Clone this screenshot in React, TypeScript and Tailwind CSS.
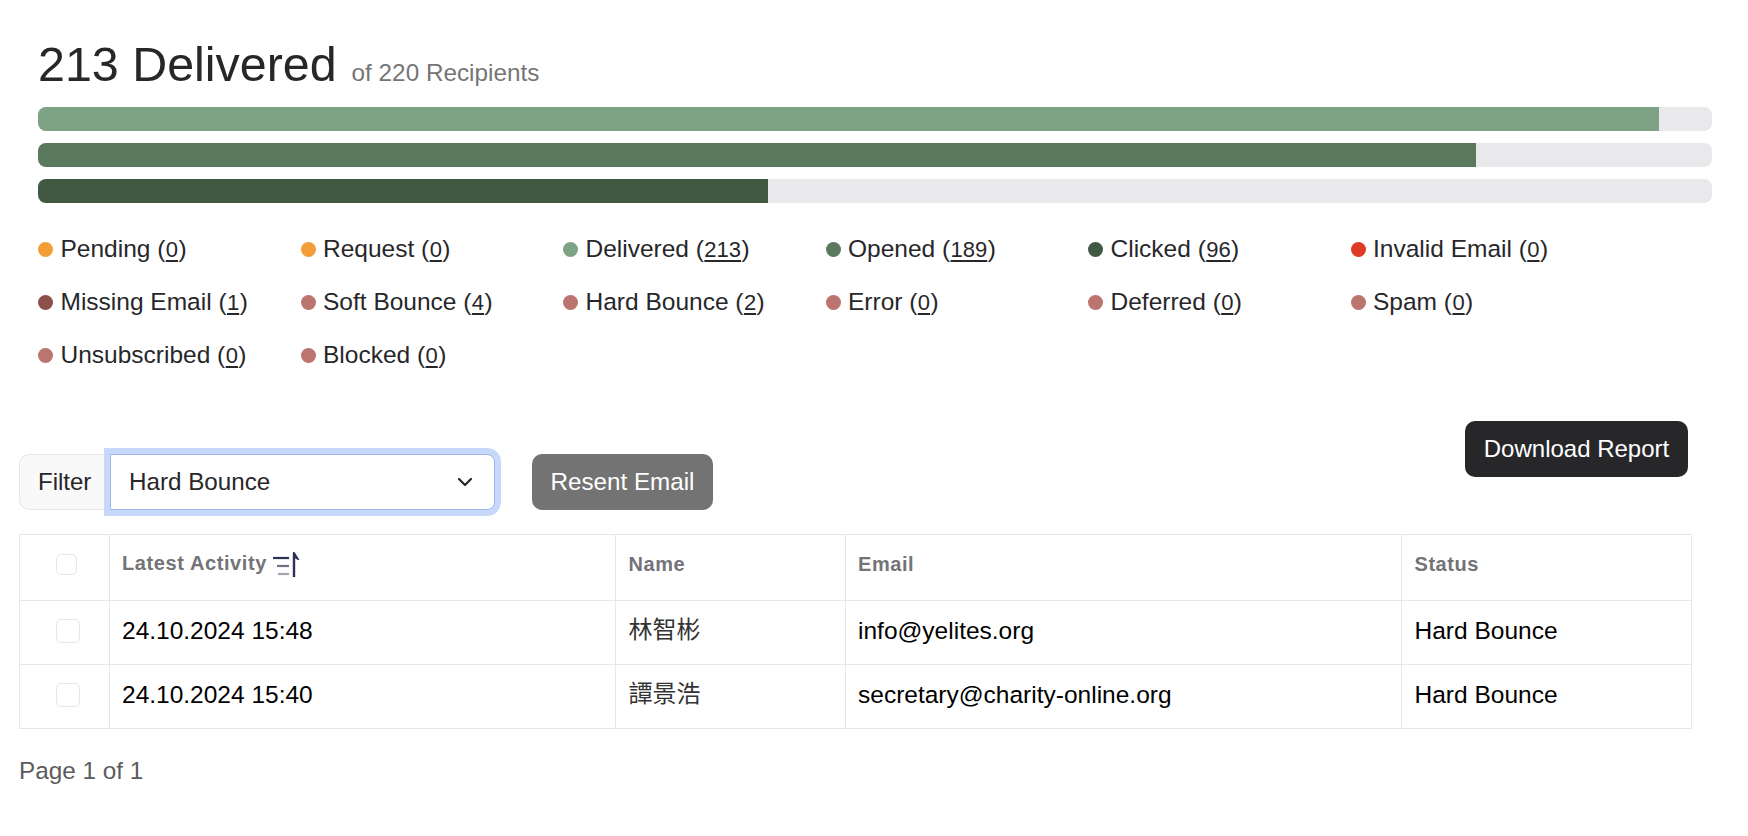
import { ChevronDown } from 'lucide-react';

interface LegendItem {
  label: string;
  count: number;
  color: string;
}

const legend: LegendItem[] = [
  { label: 'Pending', count: 0, color: 'bg-[#f29d38]' },
  { label: 'Request', count: 0, color: 'bg-[#f29d38]' },
  { label: 'Delivered', count: 213, color: 'bg-[#7da384]' },
  { label: 'Opened', count: 189, color: 'bg-[#5a795f]' },
  { label: 'Clicked', count: 96, color: 'bg-[#415943]' },
  { label: 'Invalid Email', count: 0, color: 'bg-[#de3b24]' },
  { label: 'Missing Email', count: 1, color: 'bg-[#8e504a]' },
  { label: 'Soft Bounce', count: 4, color: 'bg-[#bb746e]' },
  { label: 'Hard Bounce', count: 2, color: 'bg-[#bb746e]' },
  { label: 'Error', count: 0, color: 'bg-[#bb746e]' },
  { label: 'Deferred', count: 0, color: 'bg-[#bb746e]' },
  { label: 'Spam', count: 0, color: 'bg-[#bb746e]' },
  { label: 'Unsubscribed', count: 0, color: 'bg-[#bb746e]' },
  { label: 'Blocked', count: 0, color: 'bg-[#bb746e]' },
];

const bars = [
  { value: 213, color: 'bg-[#7da384]' },
  { value: 189, color: 'bg-[#5a795f]' },
  { value: 96, color: 'bg-[#415943]' },
];

const rows = [
  { date: '24.10.2024 15:48', name: '林智彬', email: 'info@yelites.org', status: 'Hard Bounce' },
  { date: '24.10.2024 15:40', name: '譚景浩', email: 'secretary@charity-online.org', status: 'Hard Bounce' },
];

function SortIcon() {
  return (
    <svg width="30" height="28" viewBox="0 0 30 28" fill="none" className="mb-[-4px] ml-[5px] shrink-0">
      <path d="M1 7h16" stroke="#2c3154" strokeWidth="2.2" />
      <path d="M5 15h12" stroke="#6f7285" strokeWidth="2.2" />
      <path d="M6 23h11" stroke="#a3a5b0" strokeWidth="2.2" />
      <path d="M22 26V2" stroke="#2c3154" strokeWidth="2.4" />
      <path d="M21 1h1.5l5 8H26l-5-3z" fill="#2c3154" />
    </svg>
  );
}

export default function App() {
  return (
    <div className="min-h-[836px] bg-white font-['Liberation_Sans','Noto_Sans_CJK_TC',sans-serif] text-[24.5px] text-[#27272a]">
      <div className="pt-[40px] pl-[38px] pr-[36px]">
        <div className="flex items-baseline leading-none">
          <h1 className="text-[48.4px] leading-[48px] font-normal">213 Delivered</h1>
          <span className="ml-[15px] text-[24.3px] text-[#757575]">of 220 Recipients</span>
        </div>

        <div className="mt-[19px] flex flex-col gap-[12px]">
          {bars.map((bar) => (
            <div key={bar.value} className="h-[24px] overflow-hidden rounded-[8px] bg-[#e9e9ec]">
              <div className={`h-full ${bar.color}`} style={{ width: `${(bar.value / 220) * 100}%` }} />
            </div>
          ))}
        </div>

        <div className="mt-[30px] grid w-[1575px] grid-cols-6 gap-y-[21px]">
          {legend.map((item) => (
            <div key={item.label} className="flex h-[32px] items-center leading-[32px] whitespace-nowrap">
              <span className={`mr-[7.5px] h-[15px] w-[15px] rounded-full ${item.color}`} />
              <span>
                {item.label} (<a className="px-[0.4px] text-[22px] leading-none underline underline-offset-[3px]">{item.count}</a>)
              </span>
            </div>
          ))}
        </div>
      </div>

      <div className="pl-[19px] pr-[57px]">
        <div className="mt-[50px] flex items-start justify-between pr-[3px]">
          <div className="mt-[33px] flex items-center text-[24px]">
            <div className="flex h-[56px] w-[91px] items-center rounded-l-[10px] border border-r-0 border-[#e5e7eb] bg-[#f9f9fa] pl-[18px]">
              Filter
            </div>
            <div className="flex h-[56px] w-[385px] items-center justify-between rounded-r-[8px] border border-[#9fb8ea] bg-white pr-[17px] pl-[18px] ring-[6px] ring-[#c7d8fb]">
              <span className="text-[24.2px]">Hard Bounce</span>
              <ChevronDown size={24} strokeWidth={2.2} />
            </div>
            <button className="ml-[37px] h-[56px] w-[181px] rounded-[10px] bg-[#737373] text-[24.2px] text-white">Resent Email</button>
          </div>
          <button className="h-[56px] w-[223px] rounded-[10px] bg-[#27272a] text-[24px] text-white">Download Report</button>
        </div>

        <table className="mt-[24px] w-[1672px] table-fixed border-collapse text-left text-black">
          <thead>
            <tr className="h-[66px]">
              <th className="w-[90px] border border-[#e5e7eb] pb-[7px]">
                <span className="ml-[36px] block h-[21px] w-[21px] rounded-[5px] border border-[#e5e7eb]" />
              </th>
              <th className="w-[506px] border border-[#e5e7eb] pb-[7px] pl-[12px] text-[20px] font-bold tracking-[0.6px] text-[#737378]">
                <div className="mb-[2px] flex items-center">
                  Latest Activity
                  <SortIcon />
                </div>
              </th>
              <th className="w-[230px] border border-[#e5e7eb] pb-[7px] pl-[12.5px] text-[20px] font-bold tracking-[0.55px] text-[#737378]">Name</th>
              <th className="w-[556px] border border-[#e5e7eb] pb-[7px] pl-[12px] text-[20px] font-bold tracking-[0.55px] text-[#737378]">Email</th>
              <th className="w-[290px] border border-[#e5e7eb] pb-[7px] pl-[12.5px] text-[20px] font-bold tracking-[0.55px] text-[#737378]">Status</th>
            </tr>
          </thead>
          <tbody>
            {rows.map((row) => (
              <tr key={row.email} className="h-[64px]">
                <td className="border border-[#e5e7eb] pb-[3px]">
                  <span className="ml-[36px] block h-[24px] w-[24px] rounded-[5px] border border-[#e5e7eb]" />
                </td>
                <td className="border border-[#e5e7eb] pb-[3px] pl-[12px]">{row.date}</td>
                <td className="border border-[#e5e7eb] pb-[5px] pl-[12.5px] text-[24px] text-[#333]">{row.name}</td>
                <td className="border border-[#e5e7eb] pb-[3px] pl-[12px]">{row.email}</td>
                <td className="border border-[#e5e7eb] pb-[3px] pl-[12.5px]">{row.status}</td>
              </tr>
            ))}
          </tbody>
        </table>

        <p className="mt-[26px] text-[24.3px] leading-[32px] text-[#5c5c5c]">Page 1 of 1</p>
      </div>
    </div>
  );
}
